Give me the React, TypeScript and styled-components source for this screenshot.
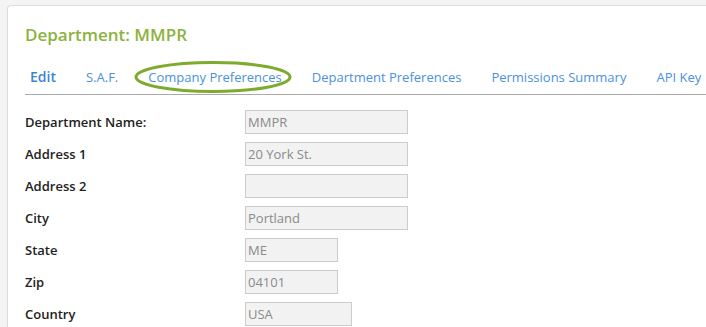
import styled, { createGlobalStyle } from "styled-components";

const Global = createGlobalStyle`
  html, body {
    margin: 0;
    padding: 0;
    background: #f4f4f4;
    font-family: "Open Sans", "Liberation Sans", sans-serif;
    overflow: hidden;
  }
`;

const Page = styled.div`
  box-sizing: border-box;
  height: 100vh;
  padding: 5px 0 0 7px;
  display: flex;
`;

const Panel = styled.section`
  flex: 1;
  min-width: 0;
  overflow: hidden;
  background: #fff;
  border: 1px solid #dcdcdc;
  border-right: none;
  border-bottom: none;
  border-top-left-radius: 4px;
  padding: 17px 0 0 17px;
`;

const Title = styled.h2`
  margin: 0;
  font-size: 17px;
  font-weight: 600;
  line-height: 24px;
  color: #8cb33e;
`;

const TabBar = styled.nav`
  display: flex;
  gap: 30px;
  margin-top: 21px;
  padding: 0 0 8px 5px;
  border-bottom: 1px solid #aaaaaa;
`;

const Tab = styled.span<{ active?: boolean }>`
  line-height: 18px;
  white-space: nowrap;
  color: ${(p) => (p.active ? "#3d85d3" : "#4a90e2")};
  font-weight: ${(p) => (p.active ? 600 : 400)};
  font-size: ${(p) => (p.active ? "14px" : "13px")};
`;

const Circled = styled.span`
  position: relative;
  display: flex;
`;

const Ring = styled.svg`
  position: absolute;
  left: -14px;
  top: -7px;
  width: 158px;
  height: 32px;
  overflow: visible;
  pointer-events: none;
`;

const Form = styled.div`
  display: grid;
  grid-template-columns: 220px auto;
  grid-auto-rows: 32px;
  align-items: center;
  margin-top: 11px;
`;

const Label = styled.label`
  font-size: 13px;
  font-weight: 600;
  color: #222;
`;

const Field = styled.div<{ w: number }>`
  width: ${(p) => p.w}px;
  height: 24px;
  box-sizing: border-box;
  border: 1px solid #cccccc;
  background: #f2f2f2;
  font-size: 13px;
  line-height: 22px;
  padding-left: 2px;
  color: #8a8a8a;
`;

const rows: [string, string, number][] = [
  ["Department Name:", "MMPR", 163],
  ["Address 1", "20 York St.", 163],
  ["Address 2", "", 163],
  ["City", "Portland", 163],
  ["State", "ME", 93],
  ["Zip", "04101", 93],
  ["Country", "USA", 107],
];

export default function App() {
  return (
    <Page>
      <Global />
      <Panel>
        <Title>Department: MMPR</Title>
        <TabBar>
          <Tab active>Edit</Tab>
          <Tab>S.A.F.</Tab>
          <Circled>
            <Tab>Company Preferences</Tab>
            <Ring viewBox="0 0 158 32">
              <ellipse cx="79" cy="16" rx="77" ry="14.5" fill="none" stroke="#7dab2e" strokeWidth="3" />
            </Ring>
          </Circled>
          <Tab>Department Preferences</Tab>
          <Tab>Permissions Summary</Tab>
          <Tab>API Key</Tab>
        </TabBar>
        <Form>
          {rows.map(([label, value, w]) => [
            <Label key={label}>{label}</Label>,
            <Field key={label + "-v"} w={w}>{value}</Field>,
          ])}
        </Form>
      </Panel>
    </Page>
  );
}
